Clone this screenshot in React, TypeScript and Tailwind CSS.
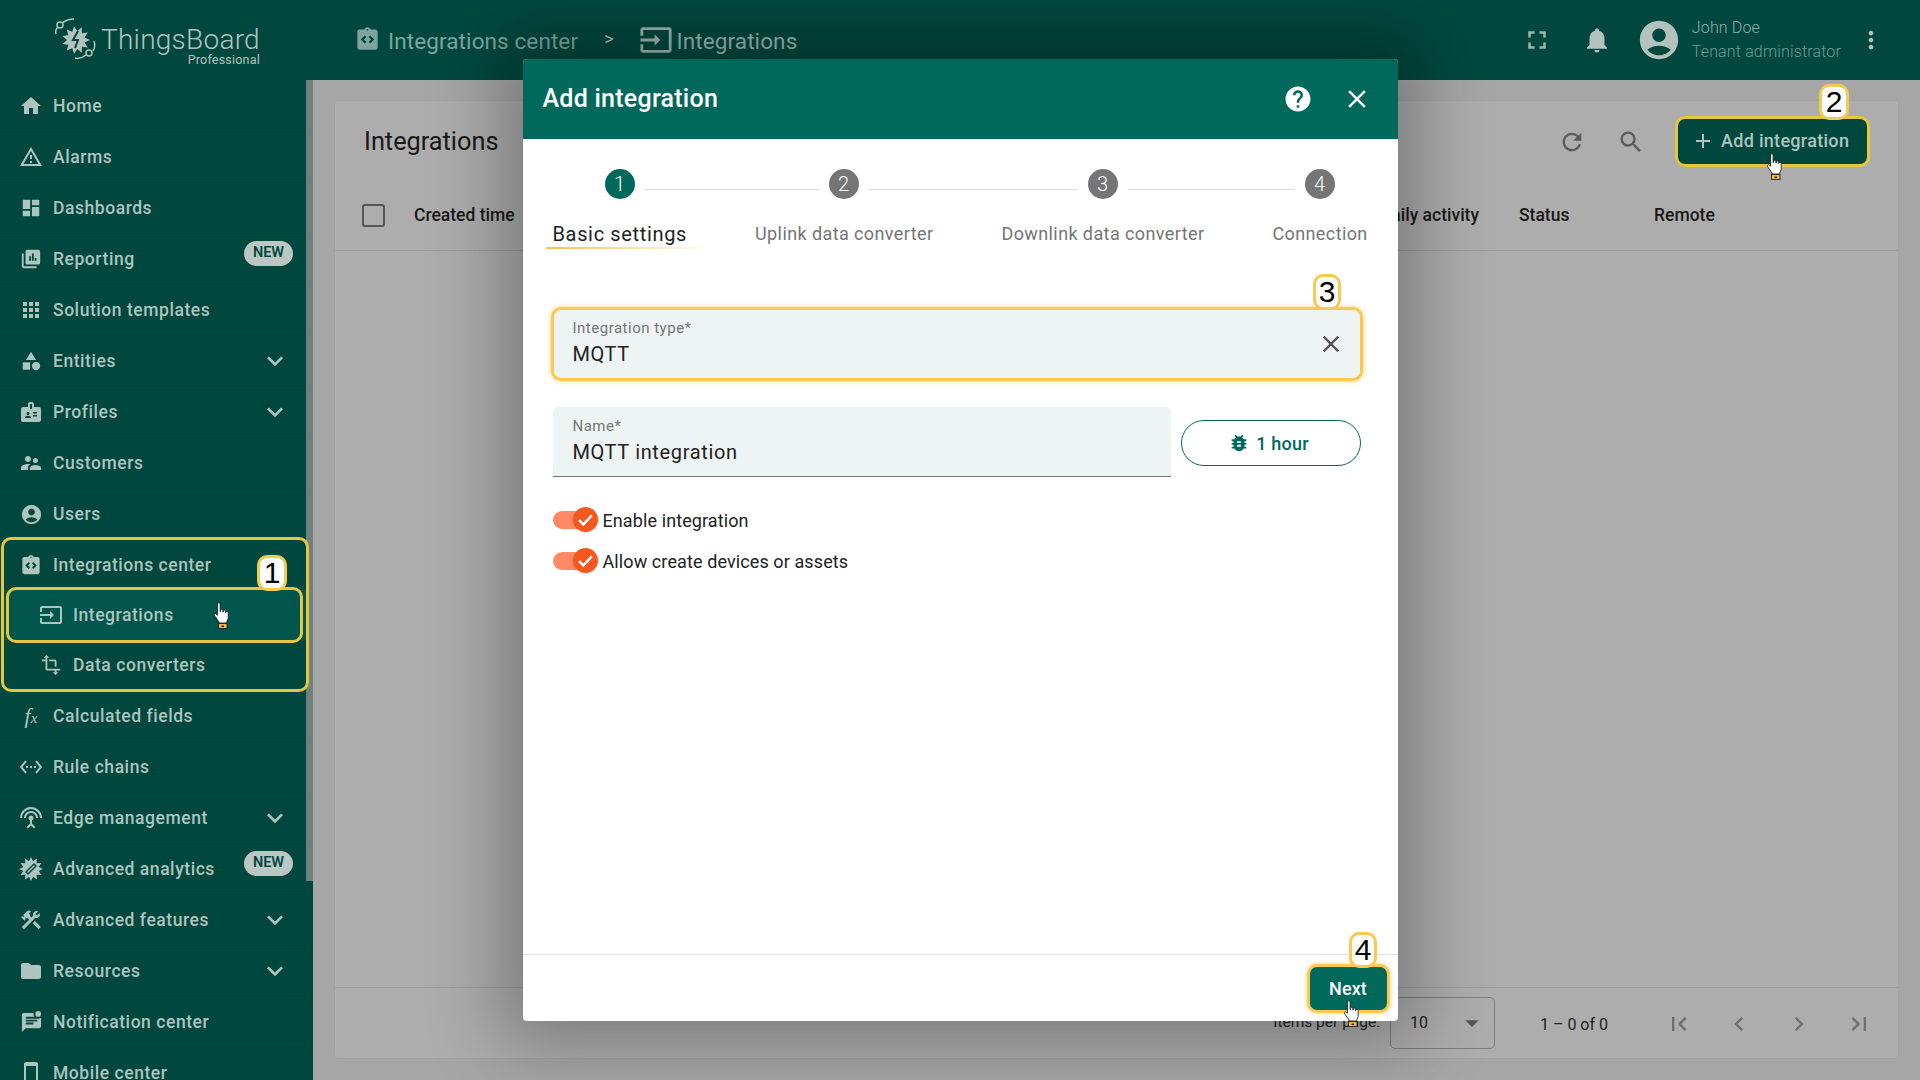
import type { ReactNode } from "react";
import {
  MdAccountCircle,
  MdAdd,
  MdArrowDropDown,
  MdApps,
  MdBadge,
  MdBugReport,
  MdCategory,
  MdChevronLeft,
  MdChevronRight,
  MdClose,
  MdConstruction,
  MdDashboard,
  MdFirstPage,
  MdFolder,
  MdFullscreen,
  MdHelp,
  MdHome,
  MdIntegrationInstructions,
  MdKeyboardArrowDown,
  MdLastPage,
  MdMarkUnreadChatAlt,
  MdMoreVert,
  MdNotifications,
  MdOutlineInput,
  MdOutlineSmartphone,
  MdOutlineWarningAmber,
  MdRefresh,
  MdSearch,
  MdSettingsEthernet,
  MdSettingsInputAntenna,
  MdSupervisorAccount,
  MdTransform,
} from "react-icons/md";

const ReportingIcon = () => (
  <svg width="22" height="22" viewBox="0 0 24 24" fill="currentColor">
    <path d="M2 6h2v14h14v2H4a2 2 0 0 1-2-2V6z" />
    <path
      fillRule="evenodd"
      d="M8 2h12a2 2 0 0 1 2 2v12a2 2 0 0 1-2 2H8a2 2 0 0 1-2-2V4a2 2 0 0 1 2-2zm2 7v5h2V9h-2zm3-3v8h2V6h-2zm3 5v3h2v-3h-2z"
    />
  </svg>
);

const spikes = (cx: number, cy: number, outer: number, inner: number, n: number) =>
  Array.from({ length: n * 2 }, (_, i) => {
    const r = i % 2 === 0 ? outer : inner;
    const a = (Math.PI * i) / n;
    return `${cx + r * Math.cos(a)},${cy + r * Math.sin(a)}`;
  }).join(" ");

const AnalyticsIcon = () => (
  <svg width="24" height="24" viewBox="0 0 24 24" fill="currentColor">
    <polygon points={spikes(12, 12, 12, 8, 12)} />
    <path d="M6 15 15 6l3 3-9 9z" fill="#00483e" />
    <path d="M8 15 15 8l1 1-7 7z" />
  </svg>
);

const FxIcon = () => (
  <span className="flex w-[24px] items-baseline justify-center font-['Liberation_Serif',serif] italic leading-none">
    <span className="text-[22px]">f</span>
    <span className="text-[15px]">x</span>
  </span>
);

const Logo = () => (
  <svg width="44" height="44" viewBox="0 0 44 44" fill="none" stroke="#b4c2be" strokeWidth="1.5">
    <polygon points={spikes(23, 23, 14, 9, 11)} fill="#b4c2be" stroke="none" />
    <path d="M25 14l-5 9h5l-3 8" stroke="#00483e" strokeWidth="2" />
    <circle cx="7" cy="8" r="3" />
    <path d="M9 6c4-3 8-4 12-4M3 17c-1-3 0-5 2-7" />
    <circle cx="36" cy="36" r="3" />
    <path d="M33 38c-4 3-8 4-11 3M40 34c2-3 2-7 1-10" />
  </svg>
);

const Hand = () => (
  <svg width="17" height="27" viewBox="0 0 17 27">
    <path
      d="M4.5 2a1.3 1.3 0 0 1 2.6 0v7.5h.4V8.5a1.2 1.2 0 0 1 2.4 0V10h.3v-.8a1.2 1.2 0 0 1 2.4 0v1.3h.2a1.2 1.2 0 0 1 2.4 0v6l-1.5 3.5v1H6v-1l-4.5-6.5a1.2 1.2 0 0 1 1.8-1.500l1.200 1.300z"
      fill="#fff"
      stroke="#222"
      strokeWidth="0.9"
    />
    <rect x="5.5" y="21.5" width="8.5" height="5" fill="#f2b84b" stroke="#222" strokeWidth="0.9" />
    <rect x="8.5" y="23.5" width="2.5" height="1.5" fill="#222" />
  </svg>
);

type NavItem = { label: string; icon: ReactNode; arrow?: boolean; isNew?: boolean };

const topItems: NavItem[] = [
  { label: "Home", icon: <MdHome size={24} /> },
  { label: "Alarms", icon: <MdOutlineWarningAmber size={24} /> },
  { label: "Dashboards", icon: <MdDashboard size={22} /> },
  { label: "Reporting", icon: <ReportingIcon />, isNew: true },
  { label: "Solution templates", icon: <MdApps size={24} /> },
  { label: "Entities", icon: <MdCategory size={22} />, arrow: true },
  { label: "Profiles", icon: <MdBadge size={24} />, arrow: true },
  { label: "Customers", icon: <MdSupervisorAccount size={24} /> },
  { label: "Users", icon: <MdAccountCircle size={23} /> },
];

const bottomItems: NavItem[] = [
  { label: "Calculated fields", icon: <FxIcon /> },
  { label: "Rule chains", icon: <MdSettingsEthernet size={24} /> },
  { label: "Edge management", icon: <MdSettingsInputAntenna size={24} />, arrow: true },
  { label: "Advanced analytics", icon: <AnalyticsIcon />, isNew: true },
  { label: "Advanced features", icon: <MdConstruction size={24} />, arrow: true },
  { label: "Resources", icon: <MdFolder size={24} />, arrow: true },
  { label: "Notification center", icon: <MdMarkUnreadChatAlt size={23} /> },
  { label: "Mobile center", icon: <MdOutlineSmartphone size={24} /> },
];

const navText = "ml-[10px] pt-[1px] text-[17.5px] font-medium tracking-[0.55px]";

const NavRow = ({ item }: { item: NavItem }) => (
  <div className="flex h-[51px] shrink-0 items-center border-b border-black/10 pl-[19px] pr-[15px]">
    <span className="flex w-[24px] justify-center">{item.icon}</span>
    <span className={navText}>{item.label}</span>
    {item.arrow && <MdKeyboardArrowDown size={32} className="ml-auto" />}
    {item.isNew && (
      <span className="ml-auto mr-[-2px] flex h-[25px] w-[49px] -translate-y-[6px] items-center justify-center rounded-full bg-[#bcc7c4] text-[14.5px] font-semibold text-[#00483e]">
        NEW
      </span>
    )}
  </div>
);

const SubRow = ({ icon, label, active }: { icon: ReactNode; label: string; active?: boolean }) => (
  <div className={`flex h-[50px] shrink-0 items-center pl-[39px] ${active ? "bg-[#00564d]" : ""}`}>
    <span className="flex w-[24px] justify-center">{icon}</span>
    <span className={navText}>{label}</span>
  </div>
);

const Sidebar = () => (
  <aside className="relative flex h-full w-[313px] shrink-0 flex-col bg-[#00483e] text-[#aec4bf]">
    <div className="relative flex h-[80px] shrink-0 pl-[53px] pt-[17px]">
      <Logo />
      <div className="ml-[4px] flex flex-col items-end leading-none">
        <span className="mt-[10px] text-[28px] font-light leading-[26px] tracking-[0.25px] text-[#b4c2be]">
          ThingsBoard
        </span>
        <span className="text-[12.5px] leading-[13px] tracking-[0.2px] text-[#b4c2be]">Professional</span>
      </div>
    </div>
    <nav className="flex min-h-0 w-[306px] flex-1 flex-col overflow-hidden pt-[1px]">
      {topItems.map((item) => (
        <NavRow key={item.label} item={item} />
      ))}
      <div className="flex h-[50px] shrink-0 items-center pl-[19px]">
        <MdIntegrationInstructions size={23} className="w-[24px]" />
        <span className={navText}>Integrations center</span>
      </div>
      <SubRow active icon={<MdOutlineInput size={24} />} label="Integrations" />
      <SubRow icon={<MdTransform size={22} />} label="Data converters" />
      <div className="h-[1px] shrink-0" />
      {bottomItems.map((item) => (
        <NavRow key={item.label} item={item} />
      ))}
    </nav>
    {/* scrollbar thumb */}
    <div className="absolute left-[306px] top-[80px] h-[801px] w-[7px] bg-[#6f807d]" />
  </aside>
);

const Toolbar = () => (
  <header className="flex h-[80px] shrink-0 items-center bg-[#00483e] pl-[41px] pr-[35px] text-[#7fa59e]">
    <MdIntegrationInstructions size={27} className="-mt-[1px]" />
    <span className="ml-[7px] mt-[4px] text-[22.5px] tracking-[0.1px]">Integrations center</span>
    <span className="mb-[3px] ml-[26px] text-[18px] text-[#b4c2be]">&gt;</span>
    <MdOutlineInput size={34} className="-mt-[1px] ml-[25px] text-[#9db5b0]" />
    <span className="ml-[4px] mt-[4px] text-[22.5px] tracking-[0.1px] text-[#9db5b0]">Integrations</span>
    <MdFullscreen size={30} className="ml-auto text-[#9db5b0]" />
    <MdNotifications size={30} className="ml-[30px] text-[#b4c2be]" />
    <MdAccountCircle size={46} className="ml-[24px] text-[#b4c2be]" />
    <div className="ml-[10px] flex flex-col">
      <span className="text-[16px] font-light leading-[24px] tracking-[0.15px] text-[#8fb0a9]">John Doe</span>
      <span className="text-[16px] font-light leading-[24px] tracking-[0.15px] text-[#6f9c93]">
        Tenant administrator
      </span>
    </div>
    <MdMoreVert size={28} className="ml-[16px] text-[#b4c2be]" />
  </header>
);

const Card = () => (
  <section className="mx-[21px] mb-[21px] mt-[20px] flex flex-1 flex-col rounded border border-[#a2a2a2] bg-[#adadad] text-[#181818]">
    <div className="flex h-[81px] shrink-0 items-center pl-[29px] pr-[28px]">
      <span className="text-[25.3px] leading-none">Integrations</span>
      <MdRefresh size={28} className="ml-auto text-[#5a5a5a]" />
      <MdSearch size={28} className="ml-[31px] text-[#5a5a5a]" />
      <div className="ml-[30px] flex h-[51px] w-[195px] items-center rounded-[10px] border-[3px] border-[#e8c53f] bg-[#00483e] pb-[2px] pl-[13px] text-[#aec4bf]">
        <MdAdd size={24} />
        <span className="ml-[6px] text-[18px] font-medium tracking-[0.3px]">Add integration</span>
      </div>
    </div>
    <div className="flex h-[69px] shrink-0 items-center border-b border-[#9c9c9c] pb-[2px] pl-[27px] text-[17.5px] font-medium">
      <span className="h-[23px] w-[23px] rounded-[3px] border-[2px] border-[#555]" />
      <span className="ml-[29px]">Created time</span>
      <span className="ml-auto">Daily activity</span>
      <span className="ml-[40px] w-[135px]">Status</span>
      <span className="w-[244px]">Remote</span>
    </div>
    <div className="flex-1" />
    <div className="flex h-[71px] shrink-0 items-center justify-end border-t border-[#9c9c9c] pr-[25px] text-[#222]">
      <span className="text-[15.5px]">Items per page:</span>
      <div className="ml-[10px] flex h-[52px] w-[105px] items-center rounded-[5px] border border-[#7d7d7d] pl-[19px] pr-[6px]">
        <span className="text-[16px]">10</span>
        <MdArrowDropDown size={32} className="ml-auto text-[#555]" />
      </div>
      <span className="ml-[45px] pt-[3px] text-[16px]">1 – 0 of 0</span>
      <div className="ml-[57px] flex gap-[32px] pt-[2px] text-[#707070]">
        <MdFirstPage size={28} />
        <MdChevronLeft size={28} />
        <MdChevronRight size={28} />
        <MdLastPage size={28} />
      </div>
    </div>
  </section>
);

const StepCircle = ({ n, active }: { n: number; active?: boolean }) => (
  <span
    className={`flex h-[30px] w-[30px] shrink-0 items-center justify-center rounded-full text-[20px] font-light text-white ${
      active ? "bg-[#00695c]" : "bg-[#757575]"
    }`}
  >
    {n}
  </span>
);

const StepLine = ({ className }: { className: string }) => (
  <span className={`mx-[10px] mt-[20px] h-[1px] bg-[#dcdcdc] ${className}`} />
);

const Toggle = ({ label }: { label: string }) => (
  <div className="flex h-[26px] items-center">
    <span className="relative h-[18px] w-[37px] rounded-full bg-[#ff8a65]">
      <span className="absolute -top-[4px] left-[20px] flex h-[25px] w-[25px] items-center justify-center rounded-full bg-[#f4581f] text-white shadow">
        <svg width="17" height="17" viewBox="0 0 24 24" fill="none" stroke="currentColor" strokeWidth="3.5">
          <path d="M3 13l6 6L21 6" />
        </svg>
      </span>
    </span>
    <span className="ml-[13px] text-[18px] tracking-[0.1px] text-[#222]">{label}</span>
  </div>
);

const Dialog = () => (
  <div className="flex h-[962px] w-[875px] flex-col overflow-hidden rounded bg-white shadow-[0_0_70px_25px_rgba(0,0,0,0.28)]">
    <div className="flex h-[80px] shrink-0 items-center bg-[#00695c] pb-[1px] pl-[20px] pr-[26px] text-white">
      <span className="text-[25px] font-medium leading-none tracking-[0.25px]">Add integration</span>
      <MdHelp size={30} className="ml-auto" />
      <MdClose size={30} className="ml-[29px]" />
    </div>
    <div className="flex flex-1 flex-col">
      <div className="flex items-start pl-[82px] pt-[30px]">
        <StepCircle n={1} active />
        <StepLine className="w-[174px]" />
        <StepCircle n={2} />
        <StepLine className="w-[209px]" />
        <StepCircle n={3} />
        <StepLine className="w-[167px]" />
        <StepCircle n={4} />
      </div>
      <div className="mt-[22px] flex gap-[68px] pl-[30px] text-[18px] leading-[26px] tracking-[0.4px] text-[#757575]">
        <span className="relative text-[20px] tracking-[0.65px] text-[#222]">
          Basic settings
          {/* marker under the active step */}
          <span className="absolute -left-[7px] top-[26px] h-[2px] w-[165px] rounded-full bg-gradient-to-r from-[#f7c04a] to-[#f7c04a]/0" />
        </span>
        <span>Uplink data converter</span>
        <span>Downlink data converter</span>
        <span>Connection</span>
      </div>
      <div className="ml-[28px] mt-[60px] flex h-[74px] w-[812px] items-center rounded-[10px] border-[3px] border-[#fcc84f] bg-[#eef4f3] pl-[19px] pr-[15px] shadow-[0_0_5px_rgba(252,200,79,0.8)]">
        <div className="flex flex-col pb-[2px]">
          <span className="text-[15px] leading-[18px] tracking-[0.5px] text-[#757575]">Integration type*</span>
          <span className="mt-[4px] text-[20px] leading-[26px] tracking-[0.65px] text-[#222]">MQTT</span>
        </div>
        <MdClose size={28} className="ml-auto text-[#555]" />
      </div>
      <div className="ml-[30px] mt-[26px] flex items-center">
        <div className="flex h-[70px] w-[618px] flex-col rounded-t-[5px] border-b-[1.5px] border-[#757575] bg-[#eef4f3] pl-[20px] pt-[10px]">
          <span className="text-[15px] leading-[18px] tracking-[0.5px] text-[#757575]">Name*</span>
          <span className="mt-[4px] text-[20px] leading-[26px] tracking-[0.65px] text-[#222]">MQTT integration</span>
        </div>
        <div className="ml-[10px] mt-[1px] flex h-[46px] w-[180px] items-center justify-center rounded-full border border-[#00695c] pr-[4px] pt-[1px] text-[#00695c]">
          <MdBugReport size={22} />
          <span className="ml-[6px] text-[18px] font-medium tracking-[0.2px]">1 hour</span>
        </div>
      </div>
      <div className="ml-[30px] mt-[30px] flex flex-col gap-[15px]">
        <Toggle label="Enable integration" />
        <Toggle label="Allow create devices or assets" />
      </div>
      <div className="mt-auto flex h-[67px] shrink-0 items-center justify-end border-t border-[#e0e0e0] pr-[8px]">
        <div className="flex h-[49px] w-[83px] items-center justify-center rounded-[10px] border-[3px] border-[#fcc84f] bg-[#00695c] text-[18px] font-medium tracking-[0.1px] text-white shadow-[0_0_5px_rgba(252,200,79,0.8)]">
          Next
        </div>
      </div>
    </div>
  </div>
);

const Badge = ({ n, className }: { n: number; className: string }) => (
  <span
    className={`absolute flex items-center justify-center rounded-[10px] border-[3px] bg-white font-['Liberation_Sans',sans-serif] text-[30px] leading-none text-black ${className}`}
  >
    {n}
  </span>
);

const App = () => {
  return (
    <div className="relative flex h-screen w-screen overflow-hidden font-['Roboto',sans-serif]">
      <Sidebar />
      <main className="flex min-w-0 flex-1 flex-col bg-[#a6a6a6]">
        <Toolbar />
        <Card />
      </main>

      {/* modal layer */}
      <div className="absolute inset-0 flex items-center justify-center">
        <Dialog />
      </div>

      {/* tutorial marks drawn over the screenshot */}
      <div className="absolute left-[1px] top-[537px] h-[155px] w-[308px] rounded-[10px] border-[3px] border-[#e8c53f]" />
      <div className="absolute left-[6px] top-[587px] h-[56px] w-[297px] rounded-[10px] border-[3px] border-[#e8c53f]" />
      <Badge n={1} className="left-[257px] top-[555px] h-[36px] w-[30px] border-[#f0cc50]" />
      <Badge n={2} className="left-[1819px] top-[84px] h-[36px] w-[30px] border-[#f0cc50]" />
      <Badge n={3} className="left-[1313px] top-[274px] h-[36px] w-[28px] border-[#fcc84f]" />
      <Badge n={4} className="left-[1349px] top-[932px] h-[36px] w-[28px] border-[#fcc84f]" />
      <span className="absolute left-[213px] top-[602px]">
        <Hand />
      </span>
      <span className="absolute left-[1766px] top-[153px]">
        <Hand />
      </span>
      <span className="absolute left-[1343px] top-[1000px]">
        <Hand />
      </span>
    </div>
  );
};

export default App;
